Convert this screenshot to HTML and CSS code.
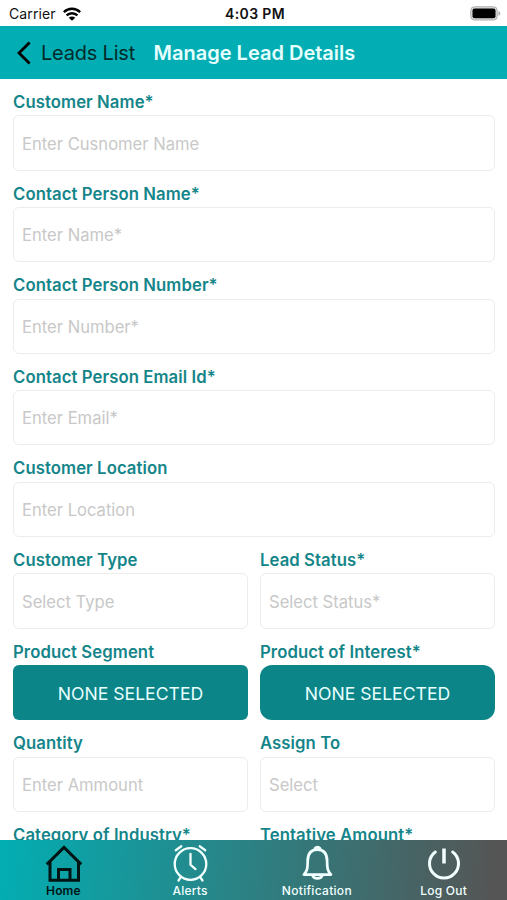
FILE: index.html
```html
<!DOCTYPE html>
<html lang="en">
<head>
<meta charset="utf-8">
<title>Manage Lead Details</title>
<link rel="stylesheet" href="styles.css">
</head>
<body>
<div class="screen">
  <div class="status">
    <div class="carrier"><span>Carrier</span>
      <svg class="wifi" viewBox="0 0 18 14" width="18" height="14"><g fill="none" stroke="#000" stroke-width="2.5"><path d="M.8 5.1C5.5.5 12.5.5 17.2 5.1"/><path d="M3.6 8.3c3.1-2.9 7.7-2.9 10.8 0"/></g><path d="M5.7 10.7c1.9-1.7 4.7-1.7 6.6 0L9 13.8z"/></svg>
    </div>
    <span class="time">4:03 PM</span>
    <svg class="battery" viewBox="0 0 31 15" width="31" height="15"><rect x=".8" y=".8" width="26.4" height="13.2" rx="3.6" fill="#ddd" stroke="#aaa" stroke-width="1"/><rect x="2.5" y="2.5" width="23" height="9.8" rx="2"/><path d="M28.5 5c2.4.8 2.4 4 0 4.8z" fill="#aaa"/></svg>
  </div>
  <header class="nav">
    <svg class="back" viewBox="0 0 14 24" width="14" height="24"><path d="M12.6 1.4 2 12l10.6 10.6" fill="none" stroke="#000" stroke-width="2.8"/></svg>
    <span class="parent">Leads List</span>
    <h1>Manage Lead Details</h1>
  </header>
  <main class="form">
    <div class="field"><label>Customer Name*</label><div class="input">Enter Cusnomer Name</div></div>
    <div class="field"><label>Contact Person Name*</label><div class="input">Enter Name*</div></div>
    <div class="field"><label>Contact Person Number*</label><div class="input">Enter Number*</div></div>
    <div class="field"><label>Contact Person Email Id*</label><div class="input">Enter Email*</div></div>
    <div class="field"><label>Customer Location</label><div class="input">Enter Location</div></div>
    <div class="pair">
      <div class="field"><label>Customer Type</label><div class="input">Select Type</div></div>
      <div class="field"><label>Lead Status*</label><div class="input">Select Status*</div></div>
    </div>
    <div class="pair">
      <div class="field"><label>Product Segment</label><div class="button">NONE SELECTED</div></div>
      <div class="field"><label>Product of Interest*</label><div class="button round">NONE SELECTED</div></div>
    </div>
    <div class="pair">
      <div class="field"><label>Quantity</label><div class="input">Enter Ammount</div></div>
      <div class="field"><label>Assign To</label><div class="input">Select</div></div>
    </div>
    <div class="pair">
      <div class="field"><label>Category of Industry*</label></div>
      <div class="field"><label>Tentative Amount*</label></div>
    </div>
  </main>
  <nav class="tabs">
    <div class="tab active">
      <svg viewBox="0 0 40 40" width="40" height="40"><g fill="none" stroke="currentColor" stroke-width="3"><path d="M3.8 21.4 21 4.4l17.2 17"/><path d="M7 19v18.300h28.500V19"/><path d="M15.500 37V26.500h11.500V37"/></g></svg>
      <span>Home</span>
    </div>
    <div class="tab">
      <svg viewBox="0 0 40 40" width="40" height="40"><g fill="none" stroke="currentColor" stroke-width="2.3" stroke-linecap="round"><circle cx="20.5" cy="21" r="15.8"/><path d="M20.5 11v10.8l5 4.3M5.8 7.2l5.500-4M29.700 3.200l5.500 4M10.800 34.200l-2.300 3.300M30.200 34.200l2.300 3.300"/></g></svg>
      <span>Alerts</span>
    </div>
    <div class="tab wide">
      <svg viewBox="0 0 40 40" width="40" height="40"><g fill="none" stroke="currentColor" stroke-width="2.7" stroke-linejoin="round"><path d="M6.8 31.6c4.2-4.1 3.7-8 3.9-14 .2-7.2 3.8-10.900 9.700-10.900s9.500 3.700 9.700 10.900c.2 6-.3 9.900 3.900 14z"/><path d="M15.400 32.200c1.300 4.300 8.700 4.300 10 0M18 7V5.400c1.400-1.600 3.600-1.600 5 0V7"/></g></svg>
      <span>Notification</span>
    </div>
    <div class="tab">
      <svg viewBox="0 0 40 40" width="40" height="40"><g fill="none" stroke="currentColor" stroke-width="3" stroke-linecap="round"><path d="M11.300 9a14.500 14.500 0 1 0 17.400 0"/><path d="M20 5.500v15" stroke-linecap="butt" stroke-width="3.500"/></g></svg>
      <span>Log Out</span>
    </div>
  </nav>
</div>
</body>
</html>
```
FILE: styles.css
```css
* { box-sizing: border-box; }
body { margin: 0; background: #fff; font-family: Inter, "Liberation Sans", sans-serif; }
.screen { width: 507px; height: 900px; display: flex; flex-direction: column; overflow: hidden; }
.status { height: 26px; flex: none; display: grid; grid-template-columns: 1fr auto 1fr; align-items: center; padding: 1px 6px 0 9px; font-size: 14px; color: #111; }
.carrier { display: flex; align-items: center; gap: 7px; letter-spacing: .1px; }
.time { font-weight: 600; letter-spacing: .35px; }
.battery { justify-self: end; }
.nav { height: 53px; flex: none; display: flex; align-items: center; padding-left: 17px; background: #02aeb3; font-size: 20px; }
.parent { margin: 0 18.5px 0 10px; color: #042a2b; letter-spacing: -.2px; }
h1 { margin: 0; font-size: 20px; font-weight: 600; color: #e6ffff; white-space: nowrap; }
.form { flex: 1; min-height: 0; overflow: hidden; padding: 10.1px 12px 0 13px; display: flex; flex-direction: column; gap: 12px; }
.field { flex: none; height: 79.6px; min-width: 0; }
.pair { flex: none; display: grid; grid-template-columns: 1fr 1fr; gap: 12px; }
label { display: block; height: 26.3px; line-height: 26.3px; font-size: 16.7px; font-weight: 600; color: #148589; white-space: nowrap; letter-spacing: .09px; }
.input, .button { height: 55.3px; display: flex; align-items: center; padding-top: 1px; border-radius: 6px; }
.input { padding-left: 8px; border: 1px solid #ececec; color: #c8c8c8; font-size: 16.6px; }
.button { justify-content: center; background: #0c8588; color: #e8ffff; font-size: 17.6px; }
.round { border-radius: 12px; }
.tabs { height: 60px; flex: none; display: grid; grid-template-columns: repeat(4, 1fr); background: linear-gradient(95deg, #02aeb3, #555 97%); }
.tab { display: flex; flex-direction: column; align-items: center; padding-top: 3px; color: #f2ffff; font-size: 12px; font-weight: 500; letter-spacing: .25px; }
.tab span { line-height: 16px; }
.wide { letter-spacing: .3px; }
.active { color: #001414; font-weight: 600; letter-spacing: .1px; }
svg { display: block; flex: none; }
```
